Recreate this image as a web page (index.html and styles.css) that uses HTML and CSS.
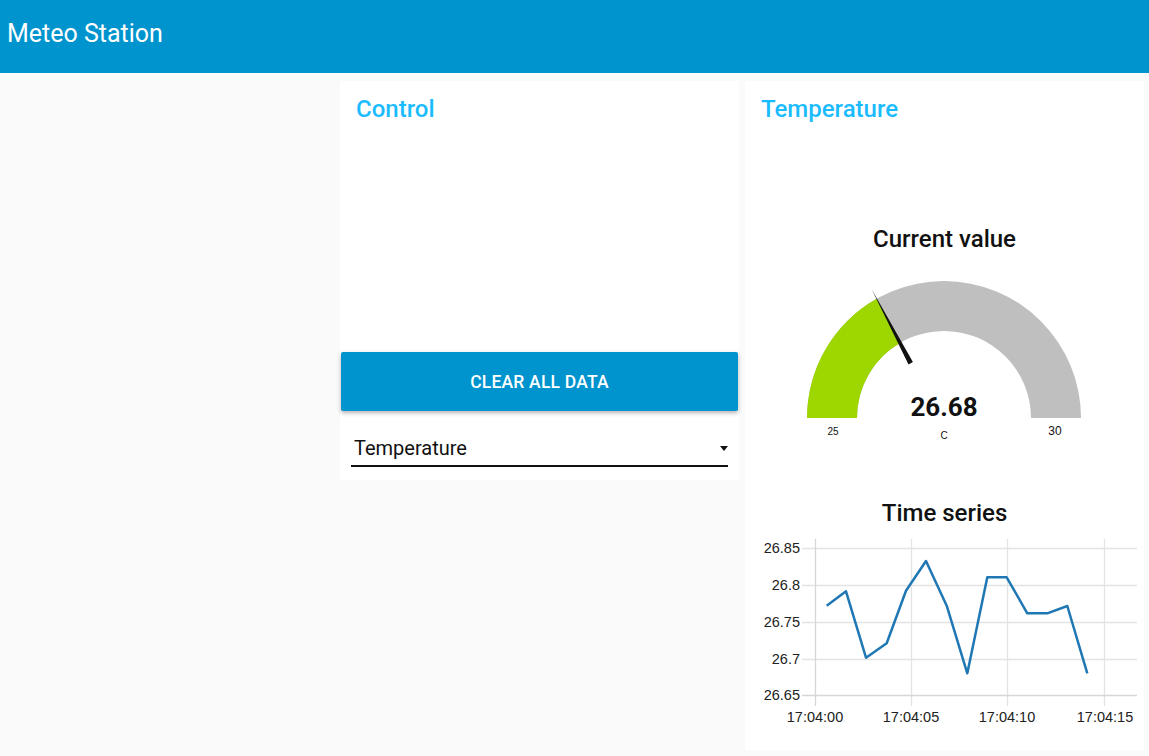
FILE: index.html
```html
<!DOCTYPE html>
<html>
<head>
<meta charset="utf-8">
<title>Meteo Station</title>
<link rel="stylesheet" href="styles.css">
</head>
<body>
<header class="toolbar">
  <h1 class="toolbar-title">Meteo Station</h1>
</header>
<main class="content">
  <section class="card card-control">
    <h2 class="card-title">Control</h2>
    <div class="spacer"></div>
    <button class="btn">CLEAR ALL DATA</button>
    <div class="select">
      <span class="select-value">Temperature</span>
      <span class="select-arrow"></span>
    </div>
  </section>
  <section class="card card-temp">
    <h2 class="card-title">Temperature</h2>
    <h3 class="widget-title gauge-title">Current value</h3>
    <svg class="gauge" width="398" height="246" viewBox="0 0 398 246">
      <path d="M62,165 A137,137 0 0 1 336,165 L286,165 A87,87 0 0 0 112,165 Z" fill="#bfbfbf"/>
      <path d="M62,165 A137,137 0 0 1 131.5,45.8 L156.2,89.3 A87,87 0 0 0 112,165 Z" fill="#9ed600"/>
      <polygon points="126.7,36.3 167.9,109.1 163.5,111.5" fill="#111"/>
      <text class="gauge-value" x="199" y="163" text-anchor="middle">26.68</text>
      <text class="gauge-small" x="88" y="182" text-anchor="middle">25</text>
      <text class="gauge-small" x="199" y="186" text-anchor="middle">C</text>
      <text class="gauge-max" x="310" y="182" text-anchor="middle">30</text>
    </svg>
    <h3 class="widget-title">Time series</h3>
    <svg class="chart" width="398" height="218" viewBox="0 0 398 218">
      <g stroke="#e3e3e3" stroke-width="1.3">
        <line x1="57" y1="21.5" x2="392" y2="21.5"/>
        <line x1="57" y1="58.5" x2="392" y2="58.5"/>
        <line x1="57" y1="95.5" x2="392" y2="95.5"/>
        <line x1="57" y1="132.5" x2="392" y2="132.5"/>
        <line x1="166.5" y1="12" x2="166.5" y2="179"/>
        <line x1="262.5" y1="12" x2="262.5" y2="179"/>
        <line x1="359.5" y1="12" x2="359.5" y2="179"/>
      </g>
      <line x1="70.5" y1="12" x2="70.5" y2="179" stroke="#d6d6d6" stroke-width="1.3"/>
      <line x1="57" y1="168.5" x2="392" y2="168.5" stroke="#d6d6d6" stroke-width="1.3"/>
      <polyline fill="none" stroke="#1f77b4" stroke-width="2.5" stroke-linejoin="round"
        points="81.7,78.7 101,64.3 121,130.7 141.7,116.3 161,63.7 181,34 201.7,78.7 222.3,146.3 242.3,50.3 261.7,50.3 282.3,86.3 302.3,86.3 322.3,79 342.3,146.3"/>
      <g class="axis-label" text-anchor="end">
        <text x="55" y="26">26.85</text>
        <text x="55" y="63">26.8</text>
        <text x="55" y="100">26.75</text>
        <text x="55" y="137">26.7</text>
        <text x="55" y="173">26.65</text>
      </g>
      <g class="axis-label" text-anchor="middle">
        <text x="70" y="195">17:04:00</text>
        <text x="166" y="195">17:04:05</text>
        <text x="262" y="195">17:04:10</text>
        <text x="360" y="195">17:04:15</text>
      </g>
    </svg>
  </section>
</main>
</body>
</html>
```

FILE: styles.css
```css
* { box-sizing: border-box; }

html, body {
  margin: 0;
  padding: 0;
}

body {
  background: #fafafa;
  font-family: Roboto, "Noto Sans", sans-serif;
  color: #111;
  width: 1149px;
  height: 756px;
  overflow: hidden;
}

.toolbar {
  height: 73px;
  background: #0094ce;
  display: flex;
  align-items: center;
  padding: 0 0 5px 7px;
}

.toolbar-title {
  margin: 0;
  font-size: 25px;
  font-weight: 400;
  color: #fff;
  line-height: 30px;
}

.content {
  display: flex;
  align-items: flex-start;
  gap: 6px;
  padding: 8px 0 0 340px;
}

.card {
  background: #fff;
  width: 399px;
  display: flex;
  flex-direction: column;
}

.card-title {
  margin: 0;
  padding: 14px 16px 0;
  font-size: 24px;
  font-weight: 500;
  line-height: 29px;
  color: #1bbcff;
}

.card-control {
  height: 399px;
}

.spacer {
  height: 228px;
}

.btn {
  margin: 0 1px;
  height: 59px;
  border: none;
  border-radius: 2px;
  background: #0094ce;
  color: #fff;
  font-family: Roboto, sans-serif;
  font-size: 17.5px;
  font-weight: 500;
  letter-spacing: 0.2px;
  box-shadow: 0 2px 4px rgba(0, 0, 0, 0.3);
  padding: 0;
}

.select {
  margin: 25px 11px 0 11px;
  height: 31px;
  border-bottom: 2px solid #111;
  display: flex;
  align-items: center;
  justify-content: space-between;
  padding: 0 0 5px 3px;
}

.select-value {
  font-size: 20px;
  line-height: 24px;
  color: #111;
}

.select-arrow {
  width: 0;
  height: 0;
  border-left: 4.5px solid transparent;
  border-right: 4.5px solid transparent;
  border-top: 5px solid #111;
  margin-right: 0;
}

.card-temp {
  height: 669px;
}

.widget-title {
  margin: 0;
  text-align: center;
  font-size: 24px;
  font-weight: 500;
  line-height: 28px;
  color: #111;
}

.gauge-title {
  margin-top: 101px;
}

.gauge, .chart {
  display: block;
}

.gauge-value {
  font-family: Roboto, sans-serif;
  font-size: 26px;
  font-weight: 700;
  fill: #111;
}

.gauge-small {
  font-family: "Liberation Sans", Arial, sans-serif;
  font-size: 10px;
  fill: #111;
}

.gauge-max {
  font-family: "Liberation Sans", Arial, sans-serif;
  font-size: 12px;
  fill: #111;
}

.axis-label {
  font-family: "Liberation Sans", Arial, sans-serif;
  font-size: 14.5px;
  fill: #222;
}
```
